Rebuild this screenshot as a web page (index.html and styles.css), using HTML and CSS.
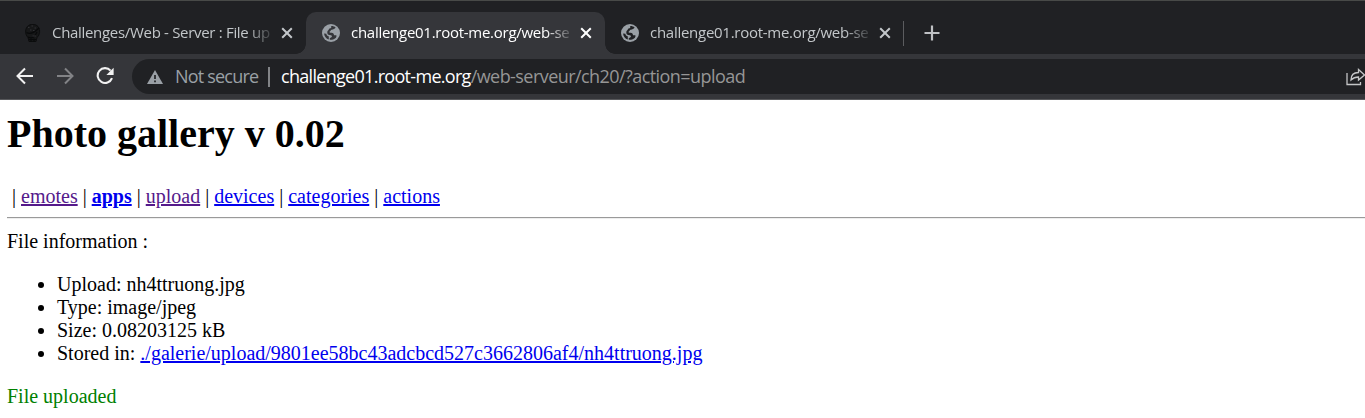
FILE: index.html
```html
<!DOCTYPE html>
<html lang="en">
<head>
<meta charset="utf-8">
<title>Photo gallery</title>
<link rel="stylesheet" href="styles.css">
</head>
<body>
<svg class="defs" width="0" height="0">
  <symbol id="globe" viewBox="0 0 18 18"><circle cx="9" cy="9" r="9" fill="#9aa0a6"/><path fill="var(--bg)" d="M9.200 2.100C11 2 12.600 2.700 13.600 3.500 12.600 5 11.500 5.600 9.600 5.700 8.600 5.900 8.700 7.300 7.500 7.800 7.300 8.600 8.200 8.800 9.200 8.800 11.200 8.700 12 9.800 12 11.200H14.300C14.800 12 14.300 13.600 13.300 14.300 11.500 15.800 9.500 16 7.800 15.800V14C9.300 13.700 10 13 9.900 11.900 9.600 10.900 8.200 11 7 10.900 5.700 10.700 5.200 9.500 5.300 8 5.500 6.500 6.500 6.300 6.900 5.300 7.100 4.300 8 4.200 9.200 3.900Z"/><path fill="var(--bg)" d="M2.100 9.500 4.300 9.700C4.700 11.500 6 12 6.800 12.400V15.600C4.200 14.800 2.200 12.400 2.100 9.500Z"/></symbol>
  <symbol id="close" viewBox="0 0 12 12"><path d="M1.2 1.2 10.8 10.8M10.8 1.2 1.2 10.8" fill="none" stroke="currentColor" stroke-width="2"/></symbol>
</svg>
<header class="browser">
  <div class="tabs">
    <div class="tab first">
      <svg class="icon" viewBox="0 0 18 18"><path d="M4 13.5C.5 10 1 4 4.5 1.5 8-.5 13 0 15 4 16.500 8 15 12 13 13.500L12 17.500H5Z" fill="#161718" stroke="#0c0d0e"/><g fill="none" stroke="#090a0b" stroke-width="1.200"><path d="M2.500 8.500C6 10.500 11 8 15 4M4 13C8 15 11 13 13 8M5 15.500H12M7 14.500V17.500M10 14.500V17.500"/></g><path d="M4 3.500H5.500M7.500 2H9M10.500 4H12M6 6H7.500M9 6.500H10.500M8.500 12H12" stroke="#303134"/></svg>
      <span class="label">Challenges/Web - Server : File up</span>
      <svg class="close"><use href="#close"/></svg>
    </div>
    <div class="tab active">
      <svg class="icon"><use href="#globe"/></svg>
      <span class="label">challenge01.root-me.org/web-se</span>
      <svg class="close"><use href="#close"/></svg>
    </div>
    <div class="tab">
      <svg class="icon"><use href="#globe"/></svg>
      <span class="label">challenge01.root-me.org/web-se</span>
      <svg class="close"><use href="#close"/></svg>
    </div>
    <span class="divider"></span>
    <svg class="plus" viewBox="0 0 16 16"><path d="M8 .5V15.5M.5 8H15.5" stroke="#bfc1c4" stroke-width="2.2"/></svg>
  </div>
  <div class="toolbar">
    <svg class="nav-icon" viewBox="0 0 18 18"><path d="M17 9H2M9 1.5 1.5 9 9 16.5" fill="none" stroke="#f1f1f1" stroke-width="2"/></svg>
    <svg class="nav-icon" viewBox="0 0 18 18"><path d="M1 9H16M9 1.5 16.5 9 9 16.5" fill="none" stroke="#828386" stroke-width="2"/></svg>
    <svg class="nav-icon" viewBox="0 0 18 18"><path d="M14.6 3.6A7.4 7.4 0 1 0 16 11.2" fill="none" stroke="#f1f1f1" stroke-width="2.1"/><path d="M17.6.8V8H10.4Z" fill="#f1f1f1"/></svg>
    <div class="address">
      <svg class="warning" viewBox="0 0 16 14"><path d="M8 0 16 14H0Z" fill="#9aa0a6"/><path d="M8 5V9M8 10.5V12.2" stroke="#202124" stroke-width="1.7"/></svg>
      <span class="secure">Not secure</span>
      <span class="bar"></span>
      <span class="url"><span class="host">challenge01.root-me.org</span><span class="path">/web-serveur/ch20/?action=upload</span></span>
      <svg class="share" viewBox="0 0 20 18"><path d="M1 5V16.5H14.5V14M5 12C5 6.5 8 4.5 12.5 4.5V1.5L18.5 7 12.5 12V9C9 9 7 10 5 12Z" fill="none" stroke="#c4c5c7" stroke-width="1.3"/></svg>
    </div>
  </div>
</header>
<main class="page">
  <h1 class="title">Photo gallery v 0.02</h1>
  <nav class="menu">&nbsp;| <a class="visited" href="#">emotes</a> | <a href="#"><b>apps</b></a> | <a class="visited" href="#">upload</a> | <a href="#">devices</a> | <a href="#">categories</a> | <a href="#">actions</a></nav>
  <hr class="rule">
  <p class="info">File information :</p>
  <ul class="details">
    <li>Upload: nh4ttruong.jpg</li>
    <li>Type: image/jpeg</li>
    <li>Size: 0.08203125 kB</li>
    <li>Stored in: <a href="#">./galerie/upload/9801ee58bc43adcbcd527c3662806af4/nh4ttruong.jpg</a></li>
  </ul>
  <p class="success">File uploaded</p>
</main>
</body>
</html>
```
FILE: styles.css
```css
* { box-sizing: border-box; }
body { margin: 0; background: #fff; overflow: hidden; font: 20px/23px "Liberation Serif", serif; color: #000; }
.defs { display: block; height: 0; }
svg { flex: none; }
.browser { height: 100px; font-family: "Open Sans", sans-serif; }
.tabs { --bg: #202124; height: 54px; padding: 11px 0 0 8px; display: flex; background: #202124; border-top: 1px solid #484a48; }
.tab { position: relative; width: 299px; height: 42px; padding: 0 13px 0 16px; display: flex; align-items: center; color: #c3c7ca; }
.tab.first { width: 298px; }
.tab.active { --bg: #35363a; background: #35363a; border-radius: 10px 10px 0 0; color: #fff; }
.tab.active::before, .tab.active::after { content: ""; position: absolute; bottom: 0; width: 10px; height: 10px; }
.tab.active::before { left: -10px; background: radial-gradient(circle at 0 0, transparent 9.5px, #35363a 10px); }
.tab.active::after { right: -10px; background: radial-gradient(circle at 100% 0, transparent 9.5px, #35363a 10px); }
.icon { width: 18px; height: 18px; }
.label { width: 220px; margin-left: 11px; padding-bottom: 2px; font-size: 15px; line-height: 24px; letter-spacing: -0.27px; white-space: nowrap; overflow: hidden; -webkit-mask-image: linear-gradient(90deg, #000 195px, transparent 224px); mask-image: linear-gradient(90deg, #000 195px, transparent 224px); }
.first .label { width: 221px; margin-left: 10px; letter-spacing: -0.31px; }
.close { width: 12px; height: 12px; margin-left: 9px; }
.divider { width: 1px; height: 25px; margin: 9px 0 0 -1px; background: #5b5c5f; }
.plus { width: 16px; height: 16px; margin: 13px 0 0 20px; }
.toolbar { height: 46px; padding: 5px 0 0 16px; display: flex; background: #35363a; border-bottom: 1px solid #57585b; }
.nav-icon { width: 18px; height: 18px; margin: 8px 22px 0 0; }
.address { flex: 1; height: 35px; margin-left: -4px; padding-left: 15px; display: flex; align-items: center; background: #202124; border-radius: 18px 0 0 18px; font-size: 18px; line-height: 26px; white-space: nowrap; overflow: hidden; }
.warning { width: 16px; height: 14px; }
.secure { width: 93px; margin-left: 12px; padding-bottom: 2px; color: #9aa0a6; letter-spacing: -0.8px; }
.bar { width: 2px; height: 20px; background: #828487; }
.url { margin-left: 11px; padding-bottom: 2px; }
.host { color: #fff; letter-spacing: -0.7px; }
.path { color: #969696; letter-spacing: -0.56px; }
.share { width: 20px; height: 18px; margin: 0 -1px 0 auto; }
.page { padding: 11px 0 0 7px; }
.title { margin: 0; font-size: 40px; line-height: 46px; font-weight: bold; }
.menu { margin-top: 28px; }
a { color: #0000ee; text-decoration: underline; }
.visited { color: #551a8b; }
.rule { height: 2px; margin: 9px 0 11px; border: 0; border-top: 1px solid #9a9a9a; border-bottom: 1px solid #eee; }
.info { margin: 0; }
.details { margin: 20px 0; padding-left: 50px; }
.success { margin: 0; color: #008000; }
```
